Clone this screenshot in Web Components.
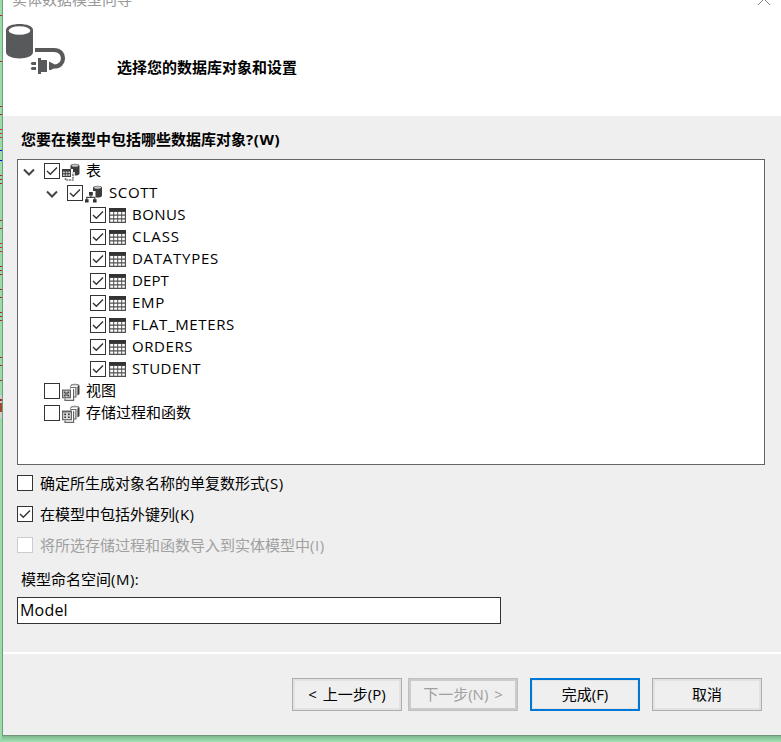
<!DOCTYPE html>
<html lang="zh-CN">
<head>
<meta charset="utf-8">
<title>实体数据模型向导</title>
<style>
html,body{margin:0;height:100%;overflow:hidden}
body{font:15px/22px "Open Sans","Noto Sans CJK SC",sans-serif;color:#000}
</style>
</head>
<body>
<wizard-window></wizard-window>
<script>
const define = (name, html, setup) => customElements.define(name, class extends HTMLElement {
  connectedCallback() {
    if (this.shadowRoot) return;
    this.attachShadow({mode: 'open'}).innerHTML = html;
    if (setup) setup(this, this.shadowRoot);
  }
});

const cylinder = '<path d="M8.500 2.800C8.500 0 17.500 0 17.500 2.800V10.500C17.500 12.800 12 13 11 12V6H8.500Z" fill="#3c3c3c"/><ellipse cx="13" cy="2.500" rx="3.500" ry="1.300" fill="#c4c4c4"/>';
const stack = '<path d="M9 4.500H13.700V13.500M3 17.200H11.500V7" fill="none" stroke="#fff" stroke-width="3.400"/><path d="M9 4.500H13.900V14H12M3 15.500V17.300H11.600V7" fill="none" stroke="#666" stroke-width="1.200"/>';
const icons = {
  table: '<path d="M0 1H17V16H0Z" fill="#505050"/><path d="M0 1H17V4.500H0Z" fill="#333"/><path d="M1.200 5h3v2.600h-3zM5.200 5h3v2.600h-3zM9.200 5h3v2.600h-3zM13.200 5h2.600v2.600h-2.600zM1.200 8.700h3v2.600h-3zM5.200 8.700h3v2.600h-3zM9.200 8.700h3v2.600h-3zM13.200 8.700h2.600v2.600h-2.600zM1.200 12.400h3v2.400h-3zM5.200 12.400h3v2.400h-3zM9.200 12.400h3v2.400h-3zM13.200 12.400h2.600v2.400h-2.600z" fill="#fff"/>',
  tables: cylinder + '<path d="M3 16.200H10.800V9" fill="none" stroke="#fff" stroke-width="4"/><path d="M3.500 15V17H11V9.500" fill="none" stroke="#777" stroke-width="1.600" stroke-dasharray="2 .7"/><path d="M0 6H9V14H0Z" fill="#3c3c3c"/><path d="M1 8.400h1.800v1.900H1zM3.700 8.400h1.800v1.900H3.700zM6.400 8.400h1.700v1.900H6.400zM1 11.300h1.800v1.700H1zM3.700 11.300h1.800v1.700H3.700zM6.400 11.300h1.700v1.700H6.400z" fill="#ccc"/>',
  schema: '<g transform="translate(-.5 0)">' + cylinder + '</g><path d="M3 6H9V12H3Z" fill="#fff"/><path d="M4 7H7.800V10.500H4ZM0 14.200H3.600V17.500H0ZM8 14.200H11.600V17.500H8Z" fill="#333"/><path d="M5.900 10V12.300M1.800 15V12.300H9.800V15" fill="none" stroke="#444" stroke-width="1.300"/>',
  views: cylinder + stack + '<path d="M0 6.500H9V15.300H0Z" fill="#666"/><path d="M1.200 7.800H7.800V14.100H1.200Z" fill="#ddd"/><path d="M1.800 8.600h1.900v1.700H1.800zM5.300 8.600h1.900v1.700H5.300zM1.800 11.700h1.900v1.700H1.800zM5.300 11.700h1.900v1.700H5.300z" fill="#444"/><circle cx="4.500" cy="11" r="2" fill="#777"/>',
  procs: cylinder + stack + '<path d="M0 5.500H10V15.300H0Z" fill="#666"/><path d="M1.200 7.500H8.800V14.100H1.200Z" fill="#e5e5e5"/><path d="M2.300 8.600h1.800v1.600H2.300zM5.900 8.600h1.800v1.600H5.900zM2.300 11.500h1.800v1.600H2.300zM5.900 11.500h1.800v1.600H5.900z" fill="#333"/>'
};
define('db-icon', '<style>:host{display:block;width:18px;height:18px;flex:none}svg{display:block}</style><svg width="18" height="18" viewBox="0 0 18 18"></svg>',
  (el, r) => r.querySelector('svg').innerHTML = icons[el.getAttribute('kind')]);

define('check-box', `<style>
:host{display:flex;align-items:center;height:22px;white-space:nowrap}
i{box-sizing:border-box;width:16px;height:16px;flex:none;border:1px solid #333;background:#fff}
svg{display:none;width:14px;height:14px}
:host([checked]) svg{display:block}
:host([disabled]){color:#a0a0a0}:host([disabled]) i{border-color:#ccc}
span{margin-left:7px}:host([bare]) span{display:none}
</style><i><svg viewBox="0 0 14 14"><path d="M2 7L5.300 10.200L12 3.500" fill="none" stroke="#333" stroke-width="1.400"/></svg></i><span><slot></slot></span>`);

define('tree-row', `<style>
:host{display:flex;align-items:center;height:22px;white-space:nowrap;font-size:15px;font-kerning:none}
.chev{width:12px;height:12px;flex:none;margin:1px 9px 0 -1px}
.chev path{display:none}
:host([open]) .chev path{display:inline}
db-icon{margin:1px 0 0 2px}
.txt{margin:-2px 0 0 6px}
</style><svg class="chev" viewBox="0 0 12 12"><path d="M1 3.500L6 8.500L11 3.500" fill="none" stroke="#444" stroke-width="2"/></svg><check-box bare></check-box><db-icon></db-icon><span class="txt"><slot></slot></span>`,
(el, r) => {
  el.style.paddingLeft = (6 + 23 * Number(el.getAttribute('level'))) + 'px';
  if (el.hasAttribute('checked')) r.querySelector('check-box').setAttribute('checked', '');
  const icon = document.createElement('db-icon');
  icon.setAttribute('kind', el.getAttribute('icon'));
  r.querySelector('db-icon').replaceWith(icon);
  const txt = r.querySelector('.txt');
  if (el.getAttribute('icon') === 'table') icon.style.marginLeft = '3px', txt.style.marginLeft = '5px';
  // Spread the letters so the label takes the width its row asks for.
  const w = Number(el.getAttribute('label-width'));
  if (w) txt.style.letterSpacing = (w - txt.getBoundingClientRect().width) / el.textContent.length + 'px';
});
</script>
<script>
define('object-tree', `<style>
:host{display:block;box-sizing:border-box;width:748px;height:306px;border:1px solid #646464;background:#fff}
</style>
<tree-row level="0" open checked icon="tables">表</tree-row>
<tree-row level="1" open checked icon="schema" label-width="49">SCOTT</tree-row>
<tree-row level="2" checked icon="table" label-width="54">BONUS</tree-row>
<tree-row level="2" checked icon="table" label-width="48">CLASS</tree-row>
<tree-row level="2" checked icon="table" label-width="87">DATATYPES</tree-row>
<tree-row level="2" checked icon="table" label-width="37">DEPT</tree-row>
<tree-row level="2" checked icon="table" label-width="33">EMP</tree-row>
<tree-row level="2" checked icon="table" label-width="103">FLAT_METERS</tree-row>
<tree-row level="2" checked icon="table" label-width="61">ORDERS</tree-row>
<tree-row level="2" checked icon="table" label-width="69">STUDENT</tree-row>
<tree-row level="0" icon="views">视图</tree-row>
<tree-row level="0" icon="procs">存储过程和函数</tree-row>`);

define('push-button', `<style>
:host{display:flex;box-sizing:border-box;width:110px;height:33px;border:1px solid #adadad;box-shadow:inset 0 0 0 2px #e2e2e2;background:#efefef;align-items:center;justify-content:center;white-space:nowrap;word-spacing:2px}
:host([primary]){border:2px solid #0078d7;box-shadow:inset 0 0 0 1px #e2e2e2}
:host([disabled]){color:#a0a0a0;border-color:#bfbfbf;box-shadow:inset 0 0 0 2px #ccc}
span{margin-top:-2px}
</style><span><slot></slot></span>`);

define('text-field', `<style>
:host{display:flex;box-sizing:border-box;width:484px;height:27px;border:1px solid #333;background:#fff;align-items:center;padding-left:2px;font-size:16px;letter-spacing:.2px}
span{margin-top:-1px}
</style><span><slot></slot></span>`);

define('wizard-header', `<style>
:host{display:block;height:116px;background:#fff;overflow:hidden}
.bar{display:flex;justify-content:space-between;height:10px;padding:0 10px 0 9px;color:#999}
.bar span{margin-top:-12px}
.body{display:flex;height:106px}
.logo{width:62px;height:54px;margin:13px 0 0 2px}
h1{margin:46px 0 0 50px;font-size:15px;line-height:22px}
</style>
<div class="bar"><span>实体数据模型向导</span><svg width="14" height="10" viewBox="0 0 14 10"><path d="M1 5L7-1L13 5" fill="none" stroke="#888"/></svg></div>
<div class="body"><svg class="logo" viewBox="5 23 62 54">
<path d="M6 30C6 22 33 22 33 30V52C33 60.500 6 60.500 6 52Z" fill="#58595b"/>
<ellipse cx="19.500" cy="30.500" rx="10.800" ry="4.300" fill="#fff"/>
<path d="M35 50H54C66 50 66 66.500 54 66.500H51" fill="none" stroke="#58595b" stroke-width="4.200"/>
<path d="M38 58H41V60H47V72H41V74H38ZM49 61.500L54 64V68L51 70H49ZM32 62H36V65H32L30.500 63.500ZM32 67H36V70H32L30.500 68.500Z" fill="#58595b"/>
</svg><h1>选择您的数据库对象和设置</h1></div>`);

define('editor-edge', `<style>:host{display:block;width:2px;height:742px;background:#97dda8}svg{display:block}</style><svg width="2" height="742" viewBox="0 0 2 742" shape-rendering="crispEdges"></svg>`, (el, r) => {
  const mark = (y, c) => `<rect x="0" y="${y}" width="2" height="1" fill="${c}"/>`;
  r.querySelector('svg').innerHTML =
    [15,61,106,114,175,179,183,220,228,266,270,274,289,297,312,316,320,357,365,380].map(y => mark(y, '#a32a28')).join('') +
    [129,133,137,243,247,251].map(y => mark(y, '#d22c24')).join('') +
    [150,160].map(y => mark(y, '#00f')).join('') +
    '<rect y="395" width="2" height="23" fill="#ccd0cc"/><rect y="399" width="2" height="2" fill="#a32a28"/><rect y="403" width="2" height="9" fill="#9b4a2d"/>';
});

define('wizard-window', `<style>
:host{display:flex;width:781px;height:742px;background:linear-gradient(#7fb68d 736px,#a3e3b2 742px)}
.dialog{box-sizing:border-box;width:779px;height:736px;border-left:1px solid #77977e;border-bottom:1px solid #72957a;background:#efefef;display:flex;flex-direction:column}
main{display:flex;flex-direction:column;align-items:flex-start;padding:12px 0 0 14px;height:523px;box-sizing:border-box}
h2{margin:0 0 9px 4px;font-size:15px;line-height:22px}
h2 span{letter-spacing:.6px}
.opts{display:grid;gap:9px;margin:7px 0 13px}
label{margin:0 0 8px 4px;line-height:20px}
label span,.opts span{letter-spacing:.5px}
footer{border-top:2px solid #fff;margin-top:13px;padding:24px 19px 0 0;display:flex;justify-content:flex-end}
push-button+push-button{margin-left:12px}
push-button+push-button[disabled]{margin-left:6px}
</style>
<editor-edge></editor-edge>
<div class="dialog">
<wizard-header></wizard-header>
<main>
<h2>您要在模型中包括哪些数据库对象<span>?(W)</span></h2>
<object-tree></object-tree>
<div class="opts">
<check-box>确定所生成对象名称的单复数形式<span>(S)</span></check-box>
<check-box checked>在模型中包括外键列<span>(K)</span></check-box>
<check-box disabled>将所选存储过程和函数导入到实体模型中<span>(I)</span></check-box>
</div>
<label>模型命名空间<span>(M):</span></label>
<text-field>Model</text-field>
</main>
<footer>
<push-button>&lt; 上一步(P)</push-button>
<push-button disabled>下一步(N) &gt;</push-button>
<push-button primary>完成(F)</push-button>
<push-button>取消</push-button>
</footer>
</div>`);
</script>
</body>
</html>
